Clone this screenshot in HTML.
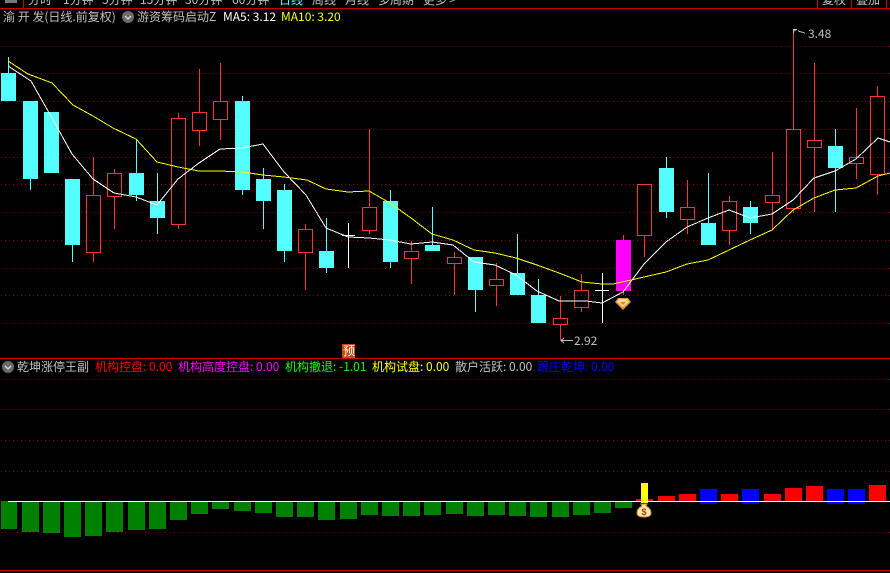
<!DOCTYPE html>
<html><head><meta charset="utf-8"><style>
html,body{margin:0;padding:0;background:#000;width:890px;height:573px;overflow:hidden}
#w{position:relative;width:890px;height:573px;overflow:hidden;background:#000;font:12px/14px "WenQuanYi Zen Hei","Noto Sans CJK SC",sans-serif;color:#c0c0c0}
#w svg{position:absolute;left:0;top:0}
#w span{position:absolute;white-space:nowrap}
.t{top:-7px}
.h{top:10px}
.s{top:360px}
</style></head><body><div id="w">
<svg width="890" height="573" viewBox="0 0 890 573" shape-rendering="crispEdges">
<g stroke="#8a0000" stroke-dasharray="1 3" fill="none">
<path d="M1 46.500H890M1 73.500H890M1 101.500H890M1 129.500H890M1 157.500H890M1 184.500H890M1 212.500H890M1 240.500H890M1 268.500H890M1 295.500H890M1 323.500H890"/>
<path d="M1 379.500H890M1 409.500H890M1 440.500H890M1 471.500H890M1 532.500H890"/>
</g>
<g fill="none" stroke="#c40000">
<path d="M0 8.500H890M0 358.500H890M0 570.500H890"/>
<path d="M23.500 0V8M817.500 0V8M851.500 0V8M886.500 0V8"/>
</g>
<rect x="5" y="0" width="12" height="3" fill="#777"/>
<!-- cyan -->
<g stroke="#54ffff" fill="none">
<path d="M8.500 57V73M30.500 179V190M72.500 245V262M136.500 139V173M136.500 195V201M157.500 173V201M157.500 218V234M242.500 96V101M242.500 190V195M263.500 168V179M263.500 201V229M284.500 184V190M284.500 251V262M326.500 218V251M326.500 268V273M390.500 190V201M390.500 262V268M432.500 207V245M475.500 290V312M517.500 234V273M538.500 279V295M666.500 157V168M666.500 212V218M708.500 173V223M750.500 201V207M750.500 223V234M835.500 129V146M835.500 168V212"/>
</g>
<g fill="#54ffff">
<rect x="1" y="73" width="15" height="28"/><rect x="23" y="101" width="15" height="78"/><rect x="44" y="112" width="15" height="61"/><rect x="65" y="179" width="15" height="66"/><rect x="129" y="173" width="15" height="22"/><rect x="150" y="201" width="15" height="17"/><rect x="235" y="101" width="15" height="89"/><rect x="256" y="179" width="15" height="22"/><rect x="277" y="190" width="15" height="61"/><rect x="319" y="251" width="15" height="17"/><rect x="383" y="201" width="15" height="61"/><rect x="425" y="245" width="15" height="6"/><rect x="468" y="257" width="15" height="33"/><rect x="510" y="273" width="15" height="22"/><rect x="531" y="295" width="15" height="28"/><rect x="659" y="168" width="15" height="44"/><rect x="701" y="223" width="15" height="22"/><rect x="743" y="207" width="15" height="16"/><rect x="828" y="146" width="15" height="22"/>
</g>
<!-- red -->
<g stroke="#ff3232" fill="none">
<path d="M93.500 157V195M93.500 252V262M114.500 169V173M114.500 196V229M178.500 113V118M178.500 224V229M199.500 69V112M199.500 130V146M220.500 63V101M220.500 119V140M305.500 224V229M305.500 252V290M369.500 129V207M369.500 230V234M411.500 241V251M411.500 258V284M454.500 252V257M454.500 263V295M496.500 263V279M496.500 285V306M560.500 296V318M560.500 324V340M581.500 274V290M581.500 307V312M644.500 235V257M687.500 180V207M687.500 219V234M729.500 196V201M729.500 230V245M772.500 152V195M772.500 202V230M793.500 30V129M793.500 208V213M814.500 63V140M814.500 147V212M856.500 108V157M856.500 163V179M877.500 86V96M877.500 174V195"/>
<path d="M86.500 195.500h14v57h-14zM107.500 173.500h14v23h-14zM171.500 118.500h14v106h-14zM192.500 112.500h14v18h-14zM213.500 101.500h14v18h-14zM298.500 229.500h14v23h-14zM362.500 207.500h14v23h-14zM404.500 251.500h14v7h-14zM447.500 257.500h14v6h-14zM489.500 279.500h14v6h-14zM553.500 318.500h14v6h-14zM574.500 290.500h14v17h-14zM637.500 184.500h14v51h-14zM680.500 207.500h14v12h-14zM722.500 201.500h14v29h-14zM765.500 195.500h14v7h-14zM786.500 129.500h14v79h-14zM807.500 140.500h14v7h-14zM849.500 157.500h14v6h-14zM870.500 96.500h14v78h-14z"/>
</g>
<path d="M348.500 223V268M342 235.500H355M602.500 273V323M595 290.500H609" stroke="#fff" fill="none"/>
<path d="M623.500 235V240M623.500 291V295" stroke="#ff3232"/>
<rect x="616" y="240" width="15" height="51" fill="#ff00ff"/>
<polyline fill="none" stroke="#ffff00" stroke-width="1" points="8,61 28,74 52,83 73,105 93,116 113,128 136,139 157,162 178,167 199,171 220,171 242,172 263,175 284,177 307,180 326,189 348,192 369,191 390,203 411,218 432,234 453,240 474,250 495,253 516,258 537,265 559,273 582,282 602,284 613,284 631,280 644,277 666,272 687,264 708,260 729,250 750,240 772,230 793,210 814,198 835,190 856,188 878,176 890,173"/>
<polyline fill="none" stroke="#ffffff" stroke-width="1" points="8,66 31,81 52,118 72,154 93,179 114,193 136,197 157,205 178,179 199,163 220,149 242,148 263,144 284,172 306,195 326,228 348,237 369,238 390,240 411,244 432,242 453,245 474,262 495,265 516,275 537,291 559,301 586,301 602,303 623,292 644,264 666,242 687,227 708,218 729,210 750,218 772,214 793,200 814,178 835,171 856,159 878,138 890,142"/>
<path d="M805 33L798 31M797 29.500H793.500V33M797 29.500L794 31" fill="none" stroke="#c0c0c0"/>
<path d="M573 340.500H561M564 338L561 340.500L564 343" fill="none" stroke="#c0c0c0"/>
</svg>
<svg width="890" height="573" viewBox="0 0 890 573">
<!-- diamond -->
<path d="M618 298H628L631 302L623 310L615 302Z" fill="#e8962e"/>
<path d="M619 299H627L629 302L623 307L617 302Z" fill="#ffd9a0"/>
<path d="M620 302H626L623 305Z" fill="#e08020"/>
</svg>
<svg width="890" height="573" viewBox="0 0 890 573" shape-rendering="crispEdges">
<g fill="#008000">
<rect x="1" y="501" width="16" height="28"/><rect x="22" y="502" width="17" height="30"/><rect x="43" y="502" width="17" height="31"/><rect x="64" y="502" width="17" height="35"/><rect x="85" y="502" width="17" height="34"/><rect x="106" y="502" width="17" height="30"/><rect x="128" y="502" width="17" height="28"/><rect x="149" y="502" width="17" height="27"/><rect x="170" y="502" width="17" height="18"/><rect x="191" y="502" width="17" height="12"/><rect x="212" y="502" width="17" height="7"/><rect x="234" y="502" width="17" height="9"/><rect x="255" y="502" width="17" height="11"/><rect x="276" y="502" width="17" height="15"/><rect x="297" y="502" width="17" height="15"/><rect x="318" y="502" width="17" height="18"/><rect x="340" y="502" width="17" height="17"/><rect x="361" y="502" width="17" height="13"/><rect x="382" y="502" width="17" height="14"/><rect x="403" y="502" width="17" height="14"/><rect x="424" y="502" width="17" height="13"/><rect x="446" y="502" width="17" height="12"/><rect x="467" y="502" width="17" height="14"/><rect x="488" y="502" width="17" height="13"/><rect x="509" y="502" width="17" height="14"/><rect x="530" y="502" width="17" height="15"/><rect x="552" y="502" width="17" height="15"/><rect x="573" y="502" width="17" height="13"/><rect x="594" y="502" width="17" height="11"/><rect x="615" y="502" width="17" height="6"/>
</g>
<g fill="#ff0000">
<rect x="636" y="499" width="17" height="2"/><rect x="658" y="496" width="17" height="5"/><rect x="679" y="494" width="17" height="7"/><rect x="721" y="494" width="17" height="7"/><rect x="764" y="494" width="17" height="7"/><rect x="785" y="488" width="17" height="13"/><rect x="806" y="486" width="17" height="15"/><rect x="869" y="485" width="17" height="16"/>
</g>
<g fill="#0000ff">
<rect x="700" y="489" width="17" height="15"/><rect x="742" y="489" width="17" height="15"/><rect x="827" y="489" width="17" height="15"/><rect x="848" y="489" width="17" height="15"/>
</g>
<rect x="641" y="483" width="7" height="20" fill="#ffff00"/>
<rect x="8" y="501" width="882" height="1" fill="#fff"/>
</svg>
<svg width="890" height="573" viewBox="0 0 890 573">
<!-- money bag -->
<path d="M641 504H647L646 506C650 508 651 511 651 513C651 516 648 517 644 517C640 517 637 516 637 513C637 511 638 508 642 506Z" fill="#ffe9a8" stroke="#c89038" stroke-width="1"/>
<text x="644" y="515" font-family="Liberation Sans" font-size="9" font-weight="bold" fill="#9a3a20" text-anchor="middle">$</text>
<!-- toggle circles -->
<circle cx="128" cy="17" r="6" fill="#6a6a6a"/>
<path d="M125 16L128 19L131 16" fill="none" stroke="#ddd" stroke-width="1.300"/>
<circle cx="8" cy="367" r="6" fill="#6a6a6a"/>
<path d="M5 366L8 369L11 366" fill="none" stroke="#ddd" stroke-width="1.300"/>
<rect x="342" y="344" width="13" height="14" fill="#c04a10"/>
</svg>
<span class="t" style="left:28px">分时</span><span class="t" style="left:63px">1分钟</span><span class="t" style="left:102px">5分钟</span><span class="t" style="left:140px">15分钟</span><span class="t" style="left:185px">30分钟</span><span class="t" style="left:232px">60分钟</span><span class="t" style="left:279px;color:#54ffff">日线</span><span class="t" style="left:312px">周线</span><span class="t" style="left:345px">月线</span><span class="t" style="left:378px">多周期</span><span class="t" style="left:423px">更多</span><span class="t" style="left:449px">&gt;</span><span class="t" style="left:822px">复权</span><span class="t" style="left:856px">叠加</span>
<span class="h" style="left:3px">渝 开 发(日线.前复权)</span>
<span class="h" style="left:137px">游资筹码启动Z</span>
<span class="h" style="left:223px;color:#fff">MA5: 3.12</span>
<span class="h" style="left:281px;color:#ffff00">MA10: 3.20</span>
<span style="left:808px;top:27px">3.48</span>
<span style="left:574px;top:334px">2.92</span>
<span style="left:343px;top:344px;color:#fff;line-height:13px">预</span>
<span class="s" style="left:17px">乾坤涨停王副</span>
<span class="s" style="left:95px;color:#ff0000">机构控盘: 0.00</span>
<span class="s" style="left:178px;color:#ff00ff">机构高度控盘: 0.00</span>
<span class="s" style="left:285px;color:#00ff00">机构撤退: -1.01</span>
<span class="s" style="left:372px;color:#ffff00">机构试盘: 0.00</span>
<span class="s" style="left:455px">散户活跃: 0.00</span>
<span class="s" style="left:537px;color:#0000ff">跟庄乾坤: 0.00</span>
</div></body></html>
